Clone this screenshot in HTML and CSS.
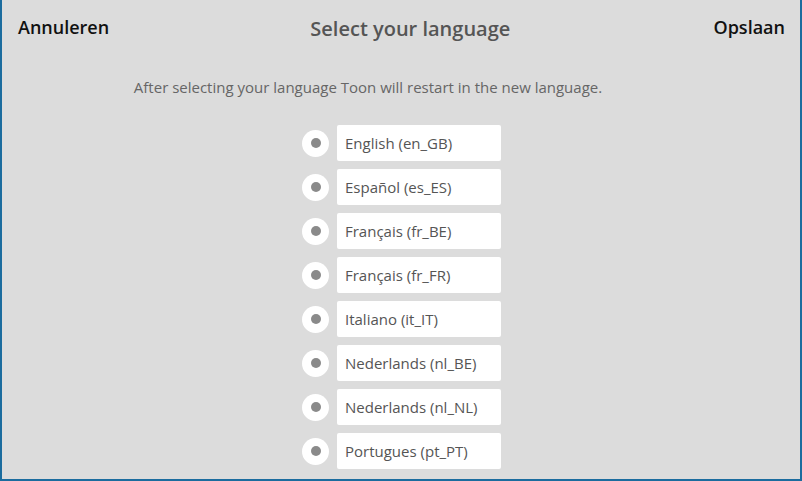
FILE: index.html
```html
<!DOCTYPE html>
<html>
<head>
  <title>Select your language</title>
  <link rel="stylesheet" href="styles.css">
</head>
<body>
  <div class="screen">
    <div class="header">
      <span class="action">Annuleren</span>
      <h1>Select your language</h1>
      <span class="action">Opslaan</span>
    </div>
    <p class="intro">After selecting your language Toon will restart in the new language.</p>
    <div class="languages">
      <div class="lang-row"><span class="radio"></span><span class="lang-box">English (en_GB)</span></div>
      <div class="lang-row"><span class="radio"></span><span class="lang-box">Español (es_ES)</span></div>
      <div class="lang-row"><span class="radio"></span><span class="lang-box">Français (fr_BE)</span></div>
      <div class="lang-row"><span class="radio"></span><span class="lang-box">Français (fr_FR)</span></div>
      <div class="lang-row"><span class="radio"></span><span class="lang-box">Italiano (it_IT)</span></div>
      <div class="lang-row"><span class="radio"></span><span class="lang-box">Nederlands (nl_BE)</span></div>
      <div class="lang-row"><span class="radio"></span><span class="lang-box">Nederlands (nl_NL)</span></div>
      <div class="lang-row"><span class="radio"></span><span class="lang-box">Portugues (pt_PT)</span></div>
    </div>
  </div>
</body>
</html>
```
FILE: styles.css
```css
body {
  margin: 0;
  font-family: "Open Sans", "Liberation Sans", sans-serif;
}

.screen {
  box-sizing: border-box;
  width: 802px;
  height: 481px;
  background: #dcdcdc;
  border-left: 2px solid #1b6c9e;
  border-right: 2px solid #1b6c9e;
  border-bottom: 2px solid #1b6c9e;
  overflow: hidden;
}

.header {
  display: flex;
  justify-content: space-between;
  align-items: center;
  height: 56px;
  padding: 0 15px 0 16px;
}

.header h1 {
  margin: 0;
  font-size: 20px;
  font-weight: 600;
  color: #555;
  padding-right: 2px;
}

.action {
  font-size: 18px;
  font-weight: 600;
  color: #111;
  margin-top: -2px;
}

.intro {
  margin: 21px 0 0;
  text-align: center;
  font-size: 15px;
  color: #666;
  padding-right: 66px;
}

.languages {
  display: flex;
  flex-direction: column;
  gap: 8px;
  margin-top: 28px;
  padding-left: 300px;
}

.lang-row {
  display: flex;
  align-items: center;
  gap: 8px;
}

.radio {
  width: 27px;
  height: 27px;
  border-radius: 50%;
  background: #fff;
  display: flex;
  align-items: center;
  justify-content: center;
}

.radio::after {
  content: "";
  width: 10px;
  height: 10px;
  border-radius: 50%;
  background: #8a8a8a;
}

.lang-box {
  box-sizing: border-box;
  width: 164px;
  height: 36px;
  background: #fff;
  border-radius: 2px;
  padding-left: 8px;
  display: flex;
  align-items: center;
  font-size: 15px;
  color: #555;
}
```
